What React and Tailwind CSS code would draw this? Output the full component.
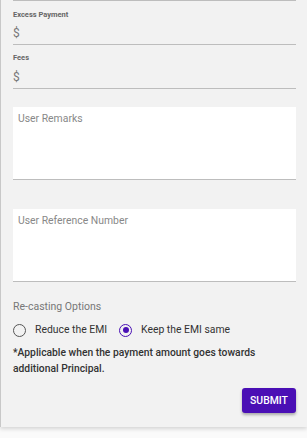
export default function App() {
  return (
    <div className="w-[307px] h-[438px] bg-[#fafafa]" style={{ fontFamily: "Roboto, 'Liberation Sans', sans-serif" }}>
      <div className="h-[427px] bg-[#f2f2f2] border-l border-l-[#c8c8c8] shadow-[0_2px_4px_rgba(0,0,0,0.15)] pl-[12px] pr-[11px] flex flex-col">
        <div className="h-px bg-[#bdbdbd]" />
        <div className="pt-[9px]">
          <div className="text-[7.5px] font-bold text-[#666] leading-[10px]">Excess Payment</div>
          <div className="text-[12px] text-[#777] leading-[14px] mt-[6px] pb-[4px] border-b border-b-[#bdbdbd]">$</div>
        </div>
        <div className="pt-[8px]">
          <div className="text-[7.5px] font-bold text-[#666] leading-[10px]">Fees</div>
          <div className="text-[12px] text-[#777] leading-[14px] mt-[7px] pb-[4px] border-b border-b-[#bdbdbd]">$</div>
        </div>
        <div className="mt-[18px] h-[73px] bg-white border-b border-b-[#bdbdbd] px-[5px] pt-[5px] text-[10.4px] text-[#888] leading-[14px]">User Remarks</div>
        <div className="mt-[29px] h-[73px] bg-white border-b border-b-[#bdbdbd] px-[5px] pt-[5px] text-[10.4px] text-[#888] leading-[14px]">User Reference Number</div>
        <div className="mt-[18px] text-[10.5px] text-[#777] leading-[14px]">Re-casting Options</div>
        <div className="mt-[8px] flex items-center h-[16px] text-[10.4px] text-[#333]">
          <span className="w-[13px] h-[13px] rounded-full border-[1.5px] border-[#555] box-border" />
          <span className="ml-[9px]">Reduce the EMI</span>
          <span className="ml-[12px] w-[13px] h-[13px] rounded-full border-[1.5px] border-[#4a11b5] box-border flex items-center justify-center">
            <span className="w-[6px] h-[6px] rounded-full bg-[#4a11b5]" />
          </span>
          <span className="ml-[9px]">Keep the EMI same</span>
        </div>
        <div className="mt-[7px] text-[10.3px] font-medium text-[#333] leading-[16px]">*Applicable when the payment amount goes towards additional Principal.</div>
        <div className="mt-[11px] flex justify-end">
          <button className="w-[54px] h-[25px] rounded-[3px] bg-[#4a0fb5] text-white text-[10.4px] font-medium shadow-[0_2px_3px_rgba(0,0,0,0.3)]">SUBMIT</button>
        </div>
      </div>
    </div>
  );
}
